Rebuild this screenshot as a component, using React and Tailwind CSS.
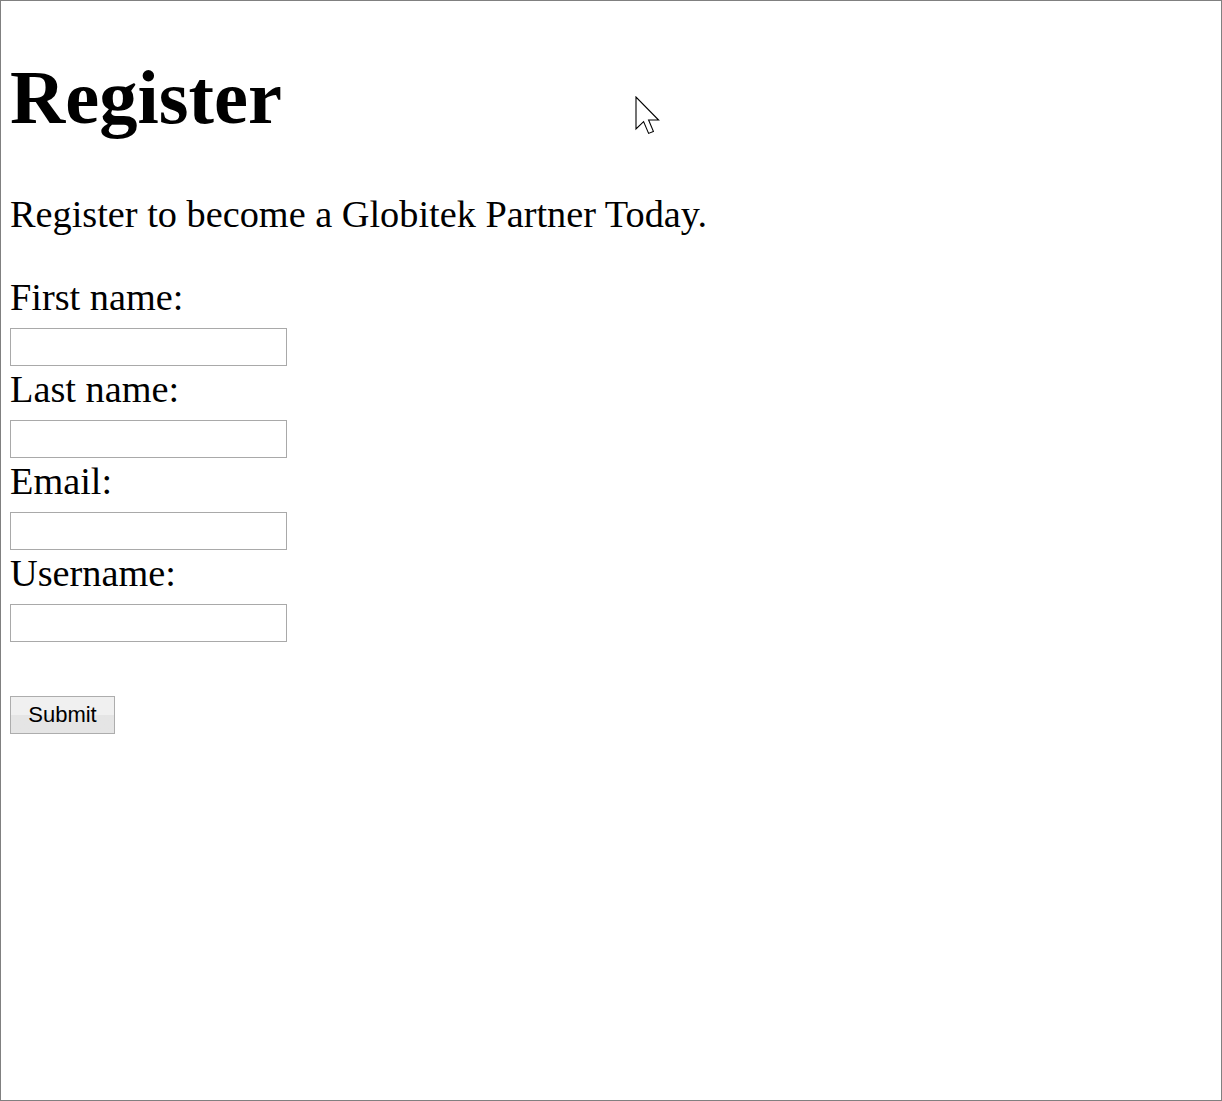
// App.jsx
const fields = ["First name:", "Last name:", "Email:", "Username:"];

const Cursor = () => (
  <svg
    className="absolute left-[634px] top-[95px]"
    width="26"
    height="40"
    viewBox="0 0 13 20"
  >
    <path
      d="M0.5 0.5 L0.5 16.5 L4.3 12.8 L6.8 18.7 L9.2 17.7 L6.8 12 L11.8 12 Z"
      fill="#fff"
      stroke="#000"
      strokeWidth="0.55"
      strokeLinejoin="miter"
    />
  </svg>
);

const App = () => {
  return (
    <div className="relative w-[1222px] h-[1101px] border border-[#808080] bg-white overflow-hidden">
      <div className="pl-[9px] pt-[1px] font-['Liberation_Serif',serif] text-[38.3px] leading-[44px] text-black">
        <h1 className="text-[76.5px] font-bold leading-[87px] mt-[52px] mb-[51px]">Register</h1>
        <p className="mb-[39px]">Register to become a Globitek Partner Today.</p>
        <form>
          {fields.map((label) => (
            <div key={label}>
              <div>{label}</div>
              <div className="h-[48px]">
                <input
                  type="text"
                  className="w-[277px] h-[38px] border border-[#a9a9a9] bg-white px-1 text-[22px] align-baseline"
                />
              </div>
            </div>
          ))}
          <div className="h-[44px]"></div>
          <button
            type="button"
            className="w-[105px] h-[38px] border border-[#adadad] bg-gradient-to-b from-[#f0f0f0] from-50% to-[#e5e5e5] to-50% font-['Liberation_Sans',Arial,sans-serif] text-[22px] leading-[26px] text-black"
          >
            Submit
          </button>
        </form>
      </div>
      <Cursor />
    </div>
  );
};

export default App;
